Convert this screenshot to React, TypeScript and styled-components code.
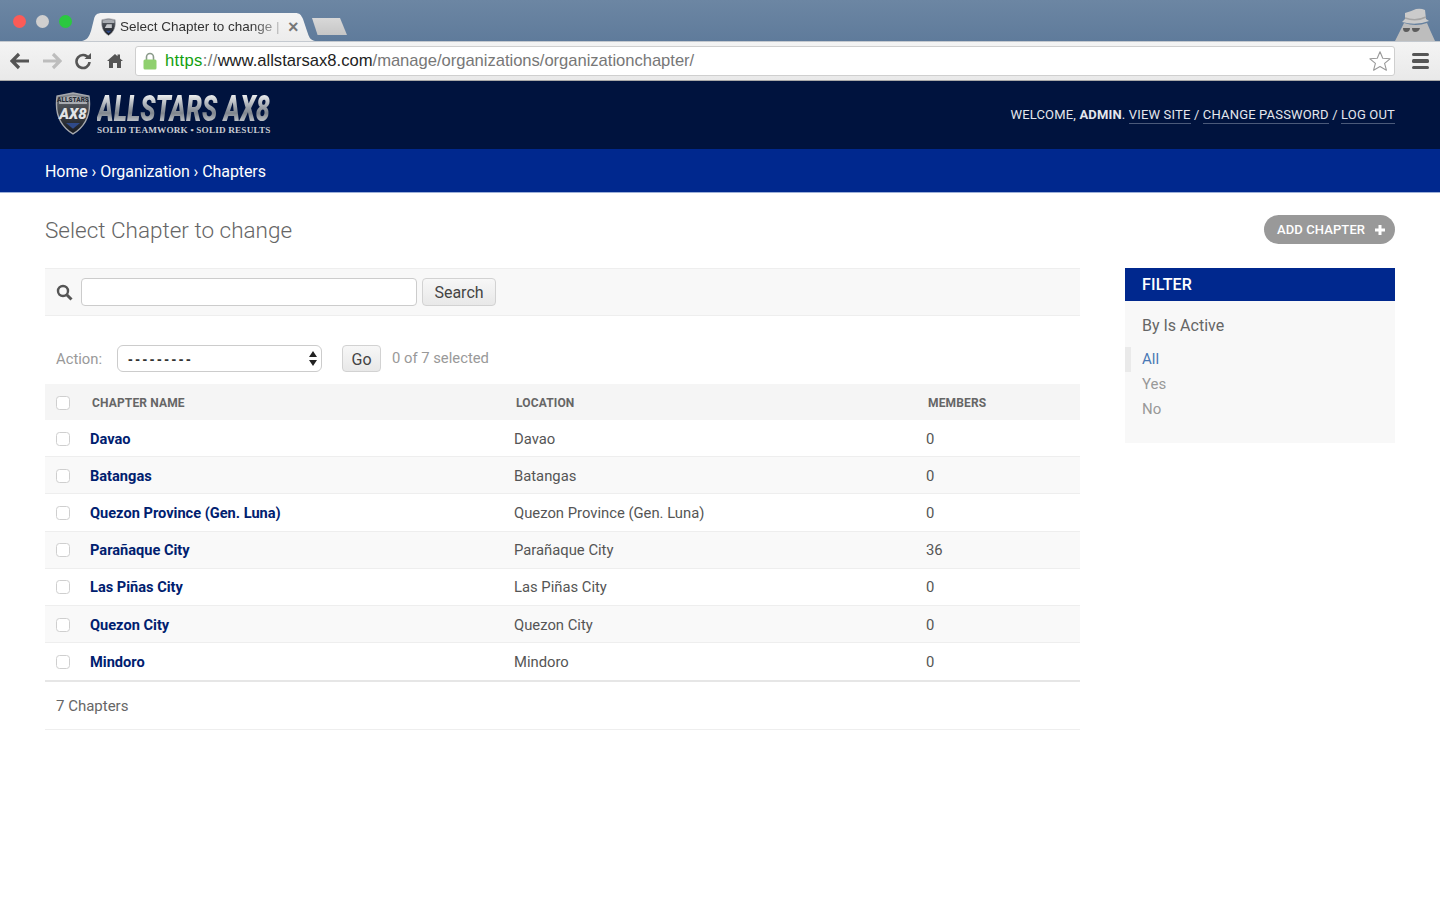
import React from "react";
import styled, { createGlobalStyle } from "styled-components";

const Global = createGlobalStyle`
  html, body { margin: 0; padding: 0; background: #fff; }
  body { font-family: Roboto, "Liberation Sans", sans-serif; color: #666; height: 900px; overflow: hidden; }
  * { box-sizing: border-box; }
`;

const TabStrip = styled.div`
  height: 41px;
  background: linear-gradient(#6c86a3, #5f7b9b);
  display: flex;
  align-items: flex-end;
  position: relative;
`;
const Lights = styled.div`
  width: 82px;
  height: 41px;
  padding: 15px 0 0 13px;
  display: flex;
  gap: 10px;
`;
const Light = styled.span<{ $c: string }>`
  width: 13px;
  height: 13px;
  border-radius: 50%;
  background: ${(p) => p.$c};
`;
const Tab = styled.div`
  width: 233px;
  height: 28px;
  background: linear-gradient(#f4f4f4, #ececec);
  clip-path: path("M0 28 C5 27 7 24 9 18 L12 6 C13 2 15 0 20 0 L213 0 C218 0 219 2 221 6 L225 18 C227 24 228 27 233 28 Z");
  display: flex;
  align-items: center;
  padding: 0 0 0 19px;
  font: 13.5px/1 "Liberation Sans", sans-serif;
  color: #333;
`;
const TabTitle = styled.span`
  margin-left: 4px;
  width: 160px;
  white-space: nowrap;
  -webkit-mask-image: linear-gradient(90deg, #000 82%, rgba(0, 0, 0, 0.25));
  mask-image: linear-gradient(90deg, #000 82%, rgba(0, 0, 0, 0.25));
`;
const TabClose = styled.span`
  margin-left: 8px;
  font-size: 18px;
  font-weight: bold;
  color: #777;
`;
const NewTab = styled.div`
  width: 35px;
  height: 17px;
  margin: 0 0 6px -3px;
  background: linear-gradient(#d8d8d8, #c6c6c6);
  clip-path: polygon(0 0, 80% 0, 100% 100%, 16% 100%);
`;
const Spy = styled.svg`
  position: absolute;
  right: 4px;
  bottom: 0;
`;
const Toolbar = styled.div`
  height: 40px;
  background: linear-gradient(#f4f4f4, #e9e9e9);
  border-top: 1px solid #c4c9cf;
  border-bottom: 1px solid #a9a9a9;
  display: flex;
  align-items: center;
`;
const NavIcons = styled.div`
  width: 135px;
  padding-left: 10px;
  display: flex;
  align-items: center;
  gap: 12px;
`;
const Omni = styled.div`
  width: 1260px;
  height: 30px;
  background: #fff;
  border: 1px solid #cfcfcf;
  border-radius: 3px;
  display: flex;
  align-items: center;
  padding: 0 3px 0 7px;
  font: 16.6px/1 Arial, "Liberation Sans", sans-serif;
`;
const Url = styled.span`
  margin-left: 8px;
  flex: 1;
  color: #777;
  white-space: nowrap;
`;
const Scheme = styled.span` letter-spacing: 0.35px; `;
const Https = styled.span` color: #13a00f; `;
const Host = styled.span` color: #222; `;
const Path = styled.span` letter-spacing: -0.03px; `;
const Menu = styled.div`
  margin-left: 17px;
  width: 17px;
  display: flex;
  flex-direction: column;
  gap: 3px;
`;
const MenuBar = styled.span`
  height: 3.5px;
  border-radius: 1.5px;
  background: #555;
`;

const Header = styled.header`
  height: 68px;
  background: #00133e;
  display: flex;
  align-items: center;
  justify-content: space-between;
  padding: 0 45px 0 55px;
`;
const Logo = styled.div`
  display: flex;
  align-items: center;
  gap: 6px;
`;
const LogoMark = styled.div`
  display: flex;
  margin-top: -3px;
`;
const LogoWords = styled.div`
  display: flex;
  flex-direction: column;
  width: 173px;
`;
const LogoName = styled.span`
  display: block;
  width: 248px;
  font: italic 900 36px/28px Roboto, sans-serif;
  transform: scaleX(0.7);
  transform-origin: left center;
  background: linear-gradient(#eceef0, #9aa0a8 45%, #80868e 65%, #c9cdd2);
  -webkit-background-clip: text;
  background-clip: text;
  color: transparent;
  white-space: nowrap;
`;
const LogoTag = styled.span`
  margin-top: 2px;
  font: bold 9.2px/11px "Liberation Serif", serif;
  letter-spacing: 0.18px;
  color: #c9ccd2;
  white-space: nowrap;
`;
const UserTools = styled.div`
  font-size: 13px;
  letter-spacing: 0.17px;
  color: #e4e7ed;
  margin-top: -1px;
`;
const UserLink = styled.a`
  color: #e4e7ed;
  border-bottom: 1px solid #4b5a7a;
  padding-bottom: 1px;
`;
const Crumbs = styled.nav`
  height: 44px;
  background: #00288e;
  border-bottom: 1px solid #9db0d8;
  color: #fff;
  padding: 1px 45px 0;
  display: flex;
  align-items: center;
  font-size: 16px;
  white-space: pre;
  letter-spacing: -0.08px;
`;
const Content = styled.main`
  padding: 0 45px;
`;
const TitleRow = styled.div`
  height: 75px;
  display: flex;
  justify-content: space-between;
  padding-top: 22px;
`;
const Title = styled.h1`
  margin: 0;
  font-size: 22.5px;
  line-height: 31px;
  font-weight: 300;
  color: #666;
`;
const AddButton = styled.a`
  height: 29px;
  width: 131px;
  border-radius: 15px;
  background: #999;
  color: #fff;
  font-size: 13px;
  font-weight: 500;
  letter-spacing: 0.1px;
  display: flex;
  align-items: center;
  gap: 9px;
  padding-left: 13px;
`;
const Columns = styled.div`
  display: flex;
  gap: 45px;
  align-items: flex-start;
`;
const MainCol = styled.div`
  width: 1035px;
`;
const SearchBar = styled.div`
  height: 48px;
  background: #f8f8f8;
  border-top: 1px solid #eee;
  border-bottom: 1px solid #eee;
  display: flex;
  align-items: center;
  padding-left: 11px;
`;
const SearchInput = styled.div`
  width: 336px;
  height: 28px;
  margin-left: 8px;
  background: #fff;
  border: 1px solid #ccc;
  border-radius: 4px;
`;
const Btn = styled.button<{ $w: number; $h: number }>`
  width: ${(p) => p.$w}px;
  height: ${(p) => p.$h}px;
  padding: 1px 0 0;
  background: linear-gradient(#f7f7f7, #e8e8e8);
  border: 1px solid #d2d2d2;
  border-radius: 4px;
  font: 16px Roboto, sans-serif;
  color: #444;
`;
const SearchBtn = styled(Btn)`
  margin-left: 5px;
`;
const Actions = styled.div`
  height: 68px;
  display: flex;
  align-items: center;
  padding: 17px 0 0 11px;
  font-size: 14.8px;
  color: #999;
`;
const ActionLabel = styled.span`
  width: 61px;
  margin-top: 1px;
`;
const Select = styled.div`
  width: 205px;
  height: 27px;
  background: #fff;
  border: 1px solid #ccc;
  border-radius: 6px;
  display: flex;
  align-items: center;
  justify-content: space-between;
  padding: 0 4px 0 10px;
  font: bold 14px "Liberation Sans", sans-serif;
  letter-spacing: 2.6px;
  color: #333;
`;
const GoBtn = styled(Btn)`
  margin-left: 20px;
`;
const Counter = styled.span`
  margin-left: 11px;
  margin-top: -1px;
`;
const HeadRow = styled.div`
  height: 36px;
  padding-top: 1px;
  background: #f5f5f5;
  display: grid;
  grid-template-columns: 47px 424px 412px 1fr;
  align-items: center;
  font-size: 12px;
  font-weight: 700;
  letter-spacing: 0.15px;
  color: #666;
`;
const Row = styled.div<{ $alt: boolean; $last: boolean }>`
  height: 37.2px;
  padding-top: 1px;
  background: ${(p) => (p.$alt ? "#f9f9f9" : "#fff")};
  border-bottom: ${(p) => (p.$last ? "0" : "1px solid #eee")};
  display: grid;
  grid-template-columns: 45px 424px 412px 1fr;
  align-items: center;
  font-size: 14.8px;
  color: #555;
`;
const CheckCell = styled.div`
  padding-left: 11px;
  display: flex;
`;
const Check = styled.span`
  width: 14px;
  height: 14px;
  background: #fff;
  border: 1px solid #cfcfcf;
  border-radius: 3.5px;
`;
const RowName = styled.a`
  color: #00206f;
  font-weight: 700;
  font-size: 14.6px;
`;
const Footer = styled.div`
  height: 49.6px;
  border-top: 2px solid #e6e6e6;
  border-bottom: 1px solid #eee;
  padding-left: 11px;
  display: flex;
  align-items: center;
  font-size: 15px;
  color: #666;
`;
const Filter = styled.aside`
  width: 270px;
  height: 175px;
  background: #f8f8f8;
`;
const FilterHead = styled.div`
  height: 33px;
  background: #00288e;
  color: #fff;
  font-size: 16px;
  font-weight: 500;
  letter-spacing: 0.2px;
  display: flex;
  align-items: center;
  padding-left: 17px;
`;
const FilterTitle = styled.div`
  margin: 15px 0 11px 17px;
  font-size: 16px;
  line-height: 20px;
  color: #666;
`;
const FilterItem = styled.div<{ $on?: boolean }>`
  height: 25px;
  padding-left: ${(p) => (p.$on ? 11 : 17)}px;
  border-left: ${(p) => (p.$on ? "6px solid #eaeaea" : "0")};
  font-size: 15px;
  line-height: 25px;
  color: ${(p) => (p.$on ? "#4a78b5" : "#999")};
`;

const rows: [string, string][] = [
  ["Davao", "0"],
  ["Batangas", "0"],
  ["Quezon Province (Gen. Luna)", "0"],
  ["Parañaque City", "36"],
  ["Las Piñas City", "0"],
  ["Quezon City", "0"],
  ["Mindoro", "0"],
];

const Shield = ({ s, label }: { s: number; label?: boolean }) => (
  <svg width={s} height={s * 1.19} viewBox="0 0 36 43">
    <defs>
      <linearGradient id="shieldBody" x1="0" y1="0" x2="0" y2="1">
        <stop offset="0" stopColor="#8f9399" />
        <stop offset="0.3" stopColor="#4c5056" />
        <stop offset="1" stopColor="#15181f" />
      </linearGradient>
    </defs>
    <path d="M18 1 L34 4 C36 18 33 33 18 42 C3 33 0 18 2 4 Z" fill="url(#shieldBody)" stroke="#a6a9ae" strokeWidth="1.4" />
    <path d="M4 6 L18 3.5 L32 6 L32 12 L4 12 Z" fill="#a8abb0" />
    {label ? (
      <>
        <text x="18" y="10.5" textAnchor="middle" fontFamily="Roboto, sans-serif" fontWeight="900" fontSize="6.5" fill="#2b2f38">ALLSTARS</text>
        <text x="18" y="27" textAnchor="middle" fontFamily="Roboto, sans-serif" fontStyle="italic" fontWeight="900" fontSize="15" fill="#e2e4e7">AX8</text>
      </>
    ) : (
      <path d="M9 24 L14 15 H26 V24 Z" fill="#c8cacd" />
    )}
    <path d="M11 31 H25 L18 37 Z" fill="#2f4a8a" />
  </svg>
);

export default function App() {
  return (
    <>
      <Global />
      <TabStrip>
        <Lights>
          <Light $c="#fc5b57" />
          <Light $c="#cfcfcf" />
          <Light $c="#2bc840" />
        </Lights>
        <Tab>
          <Shield s={15} />
          <TabTitle>Select Chapter to change |</TabTitle>
          <TabClose>×</TabClose>
        </Tab>
        <NewTab />
        <Spy width="44" height="36" viewBox="0 0 44 36">
          <path d="M12 18 L9 24 L3 36 H43 L38 25 L35 18 Q24 22 12 18 Z" fill="#bdbdbd" />
          <path d="M13 8 Q20 6 24 4 Q29 3 33 5 L34 14 L37 16 Q24 21 10 17 L13 14 Z" fill="#cbcbcb" />
          <path d="M13 13 Q24 17 34 12" fill="none" stroke="#a5a5a5" strokeWidth="1.4" />
          <path d="M11 23 H18 Q18 27 14 27 Q11 27 11 23 Z M20 23 H28 Q27 27 23 27 Q20 27 20 23 Z" fill="#5c5c5c" />
        </Spy>
      </TabStrip>
      <Toolbar>
        <NavIcons>
          <svg width="20" height="18" viewBox="0 0 20 18">
            <path d="M9 2 L2 9 L9 16 M2 9 H19" fill="none" stroke="#555" strokeWidth="3.2" />
          </svg>
          <svg width="20" height="18" viewBox="0 0 20 18">
            <path d="M11 2 L18 9 L11 16 M18 9 H1" fill="none" stroke="#bdbdbd" strokeWidth="3.2" />
          </svg>
          <svg width="18" height="18" viewBox="0 0 18 18">
            <path d="M14.5 6 A6.5 6.5 0 1 0 15.5 10" fill="none" stroke="#555" strokeWidth="2.6" />
            <path d="M10.5 7 H17 V1 Z" fill="#555" />
          </svg>
          <svg width="19" height="16" viewBox="-3 0 19 16">
            <path d="M8 1 L10.5 3.2 V1.5 H13 V5.4 L16 8 H14 V15 H10 V10 H6 V15 H2 V8 H0 Z" fill="#555" />
          </svg>
        </NavIcons>
        <Omni>
          <svg width="14" height="18" viewBox="0 0 14 18">
            <path d="M3.5 8 V5 A3.5 3.5 0 0 1 10.5 5 V8" fill="none" stroke="#8a9a8a" strokeWidth="1.6" />
            <rect x="0.5" y="7.5" width="13" height="10" rx="1.5" fill="#8fd06e" />
          </svg>
          <Url>
            <Scheme><Https>https</Https>://</Scheme><Host>www.allstarsax8.com</Host><Path>/manage/organizations/organizationchapter/</Path>
          </Url>
          <svg width="22" height="22" viewBox="0 0 24 24">
            <path d="M12 2 L15 9 L23 9.6 L17 14.6 L19 22 L12 18 L5 22 L7 14.6 L1 9.6 L9 9 Z" fill="#fff" stroke="#999" strokeWidth="1.2" strokeLinejoin="round" />
          </svg>
        </Omni>
        <Menu>
          <MenuBar />
          <MenuBar />
          <MenuBar />
        </Menu>
      </Toolbar>
      <Header>
        <Logo>
          <LogoMark><Shield s={36} label /></LogoMark>
          <LogoWords>
            <LogoName>ALLSTARS AX8</LogoName>
            <LogoTag>SOLID TEAMWORK • SOLID RESULTS</LogoTag>
          </LogoWords>
        </Logo>
        <UserTools>
          WELCOME, <b>ADMIN</b>. <UserLink>VIEW SITE</UserLink> / <UserLink>CHANGE PASSWORD</UserLink> / <UserLink>LOG OUT</UserLink>
        </UserTools>
      </Header>
      <Crumbs>Home › Organization › Chapters</Crumbs>
      <Content>
        <TitleRow>
          <Title>Select Chapter to change</Title>
          <AddButton>
            ADD CHAPTER
            <svg width="12" height="12" viewBox="0 0 12 12">
              <path d="M6 1 V11 M1 6 H11" stroke="#fff" strokeWidth="3" />
            </svg>
          </AddButton>
        </TitleRow>
        <Columns>
          <MainCol>
            <SearchBar>
              <svg width="17" height="17" viewBox="0 0 17 17">
                <circle cx="7" cy="7" r="5" fill="none" stroke="#555" strokeWidth="2.4" />
                <path d="M11 11 L15.5 15.5" stroke="#555" strokeWidth="3" />
              </svg>
              <SearchInput />
              <SearchBtn $w={74} $h={28}>Search</SearchBtn>
            </SearchBar>
            <Actions>
              <ActionLabel>Action:</ActionLabel>
              <Select>
                ---------
                <svg width="8" height="15" viewBox="0 0 8 15">
                  <path d="M4 0 L8 6 H0 Z M0 9 H8 L4 15 Z" fill="#222" />
                </svg>
              </Select>
              <GoBtn $w={39} $h={27}>Go</GoBtn>
              <Counter>0 of 7 selected</Counter>
            </Actions>
            <HeadRow>
              <CheckCell><Check /></CheckCell>
              <span>CHAPTER NAME</span>
              <span>LOCATION</span>
              <span>MEMBERS</span>
            </HeadRow>
            {rows.map(([name, members], i) => (
              <Row key={name} $alt={i % 2 === 1} $last={i === rows.length - 1}>
                <CheckCell><Check /></CheckCell>
                <RowName>{name}</RowName>
                <span>{name}</span>
                <span>{members}</span>
              </Row>
            ))}
            <Footer>7 Chapters</Footer>
          </MainCol>
          <Filter>
            <FilterHead>FILTER</FilterHead>
            <FilterTitle>By Is Active</FilterTitle>
            <FilterItem $on>All</FilterItem>
            <FilterItem>Yes</FilterItem>
            <FilterItem>No</FilterItem>
          </Filter>
        </Columns>
      </Content>
    </>
  );
}
